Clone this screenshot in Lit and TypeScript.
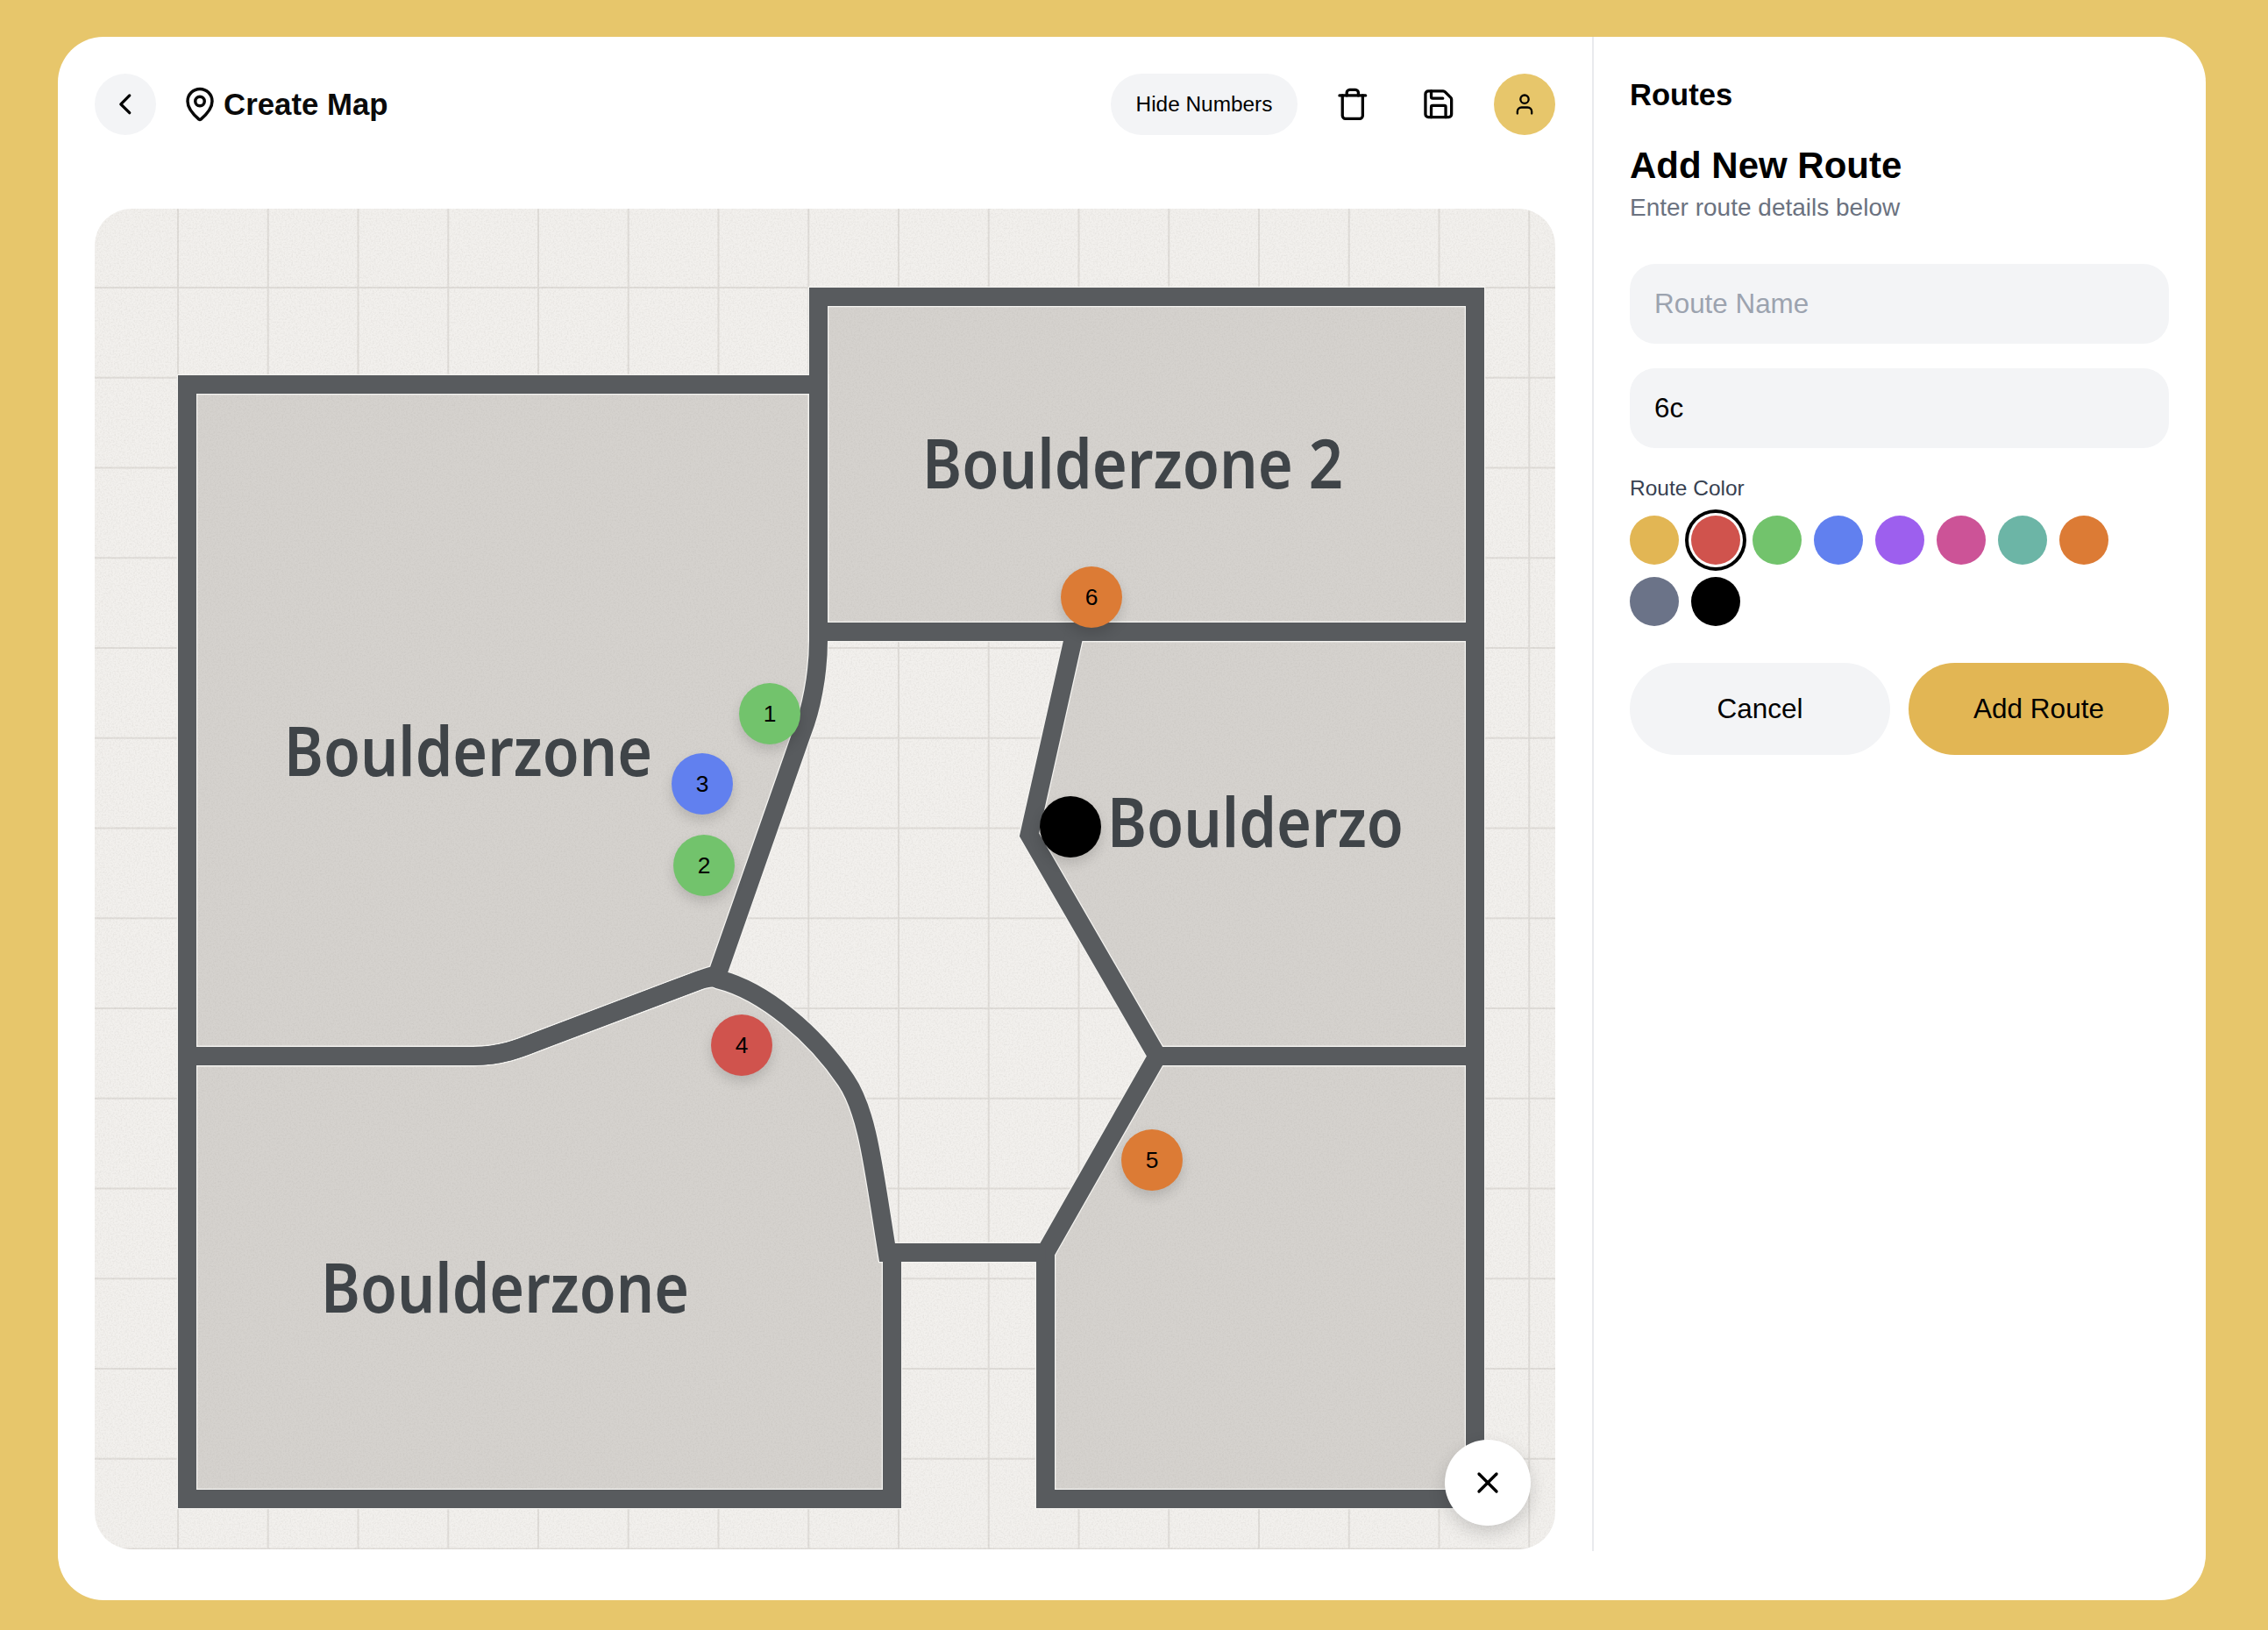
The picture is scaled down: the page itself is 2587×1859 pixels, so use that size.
import { css, html, LitElement, svg } from 'lit';
import { customElement, state } from 'lit/decorators.js';
import { classMap } from 'lit/directives/class-map.js';
import { styleMap } from 'lit/directives/style-map.js';

const ROUTE_COLORS = [
    '#e2b654', '#d0534d', '#72c36c', '#6180ef', '#9d5fee',
    '#cc5397', '#6cb5a6', '#dc7b35', '#6b7388', '#000000',
];

// Pin centres, in map pixels
const PINS = [
    { n: 1, x: 770, y: 576, color: '#72c36c' },
    { n: 2, x: 695, y: 749, color: '#72c36c' },
    { n: 3, x: 693, y: 656, color: '#6180ef' },
    { n: 4, x: 738, y: 954, color: '#d0534d' },
    { n: 5, x: 1206, y: 1085, color: '#dc7b35' },
    { n: 6, x: 1137, y: 443, color: '#dc7b35' },
    { n: 7, x: 1113, y: 705, color: '#000000' },
];

// Floor plan, drawn in page coordinates through the viewBox.
// Straight walls sit on .5 so their 21px stroke lands on whole pixels.
const ZONES = [
    'M213.5 438.5H933.5V730C933.5 770 925 810 915 835L818 1112Q812 1112 792 1120L612 1188C592 1196 572 1204 540 1204.5H213.5Z',
    'M213.5 1204.5H540C572 1204 592 1196 612 1188L792 1120Q812 1112 820 1117C872 1130 930 1180 965 1232C990 1269 996 1330 1012 1428.5H1017.5V1709.5H213.5Z',
    'M933.5 338.5H1682.5V720.5H933.5Z',
    'M1226 720.5L1174 952L1320 1204.5H1682.5V720.5Z',
    'M1320 1204.5H1682.5V1709.5H1192.5V1428.5Z',
    'M1012 1428.5H1192.5',
];

const LABELS = [
    { text: 'Boulderzone', x: 324, y: 885, w: 420 },
    { text: 'Boulderzone', x: 366, y: 1497, w: 420 },
    { text: 'Boulderzone 2', x: 1052, y: 557, w: 480 },
    { text: 'Boulderzo', x: 1263, y: 966, w: 338 },
];

const GRID_STEP = 102.75;

const icon = (size: number, body: unknown) => html`<svg
    width=${size} height=${size} viewBox="0 0 24 24" fill="none" stroke="currentColor"
    stroke-width="2" stroke-linecap="round" stroke-linejoin="round">${body}</svg>`;

const backIcon = svg`<path d="m15 18-6-6 6-6"/>`;
const pinIcon = svg`<path d="M20 10c0 4.993-5.539 10.193-7.399 11.799a1 1 0 0 1-1.202 0C9.539 20.193 4 14.993 4 10a8 8 0 0 1 16 0"/><circle cx="12" cy="10" r="3"/>`;
const trashIcon = svg`<path d="M3 6h18"/><path d="M19 6v14c0 1-1 2-2 2H7c-1 0-2-1-2-2V6"/><path d="M8 6V4c0-1 1-2 2-2h4c1 0 2 1 2 2v2"/>`;
const saveIcon = svg`<path d="M15.2 3a2 2 0 0 1 1.4.6l3.8 3.8a2 2 0 0 1 .6 1.4V19a2 2 0 0 1-2 2H5a2 2 0 0 1-2-2V5a2 2 0 0 1 2-2z"/><path d="M17 21v-7a1 1 0 0 0-1-1H8a1 1 0 0 0-1 1v7"/><path d="M7 3v4a1 1 0 0 0 1 1h7"/>`;
const userIcon = svg`<path d="M19 21v-2a4 4 0 0 0-4-4H9a4 4 0 0 0-4 4v2"/><circle cx="12" cy="7" r="4"/>`;
const closeIcon = svg`<path d="M18 6 6 18"/><path d="m6 6 12 12"/>`;

// Create Map page
// -----------------------------------------------------------------------------
@customElement('app-root')
export class AppRoot extends LitElement {
    static override styles = css`
    :host {
      display: block;
      box-sizing: border-box;
      height: 1859px;
      padding: 42px 71px 34px 66px;
      background: #e7c66b;
      font-family: "Liberation Sans", Arial, sans-serif;
      color: #000;
    }
    * {
      box-sizing: border-box;
    }
    button {
      font-family: inherit;
      color: inherit;
      border: none;
      padding: 0;
    }
    .card {
      display: flex;
      align-items: flex-start;
      height: 100%;
      background: #fff;
      border-radius: 52px;
      overflow: hidden;
    }
    .editor {
      width: 1752px;
      height: 1727px;
      flex: none;
      padding: 42px 42px 0 42px;
      border-right: 2px solid #e9eaed;
    }
    .header {
      display: flex;
      align-items: center;
      height: 70px;
      margin-bottom: 84px;
    }
    .round {
      display: flex;
      align-items: center;
      justify-content: center;
      width: 70px;
      height: 70px;
      flex: none;
      border-radius: 50%;
      background: transparent;
    }
    .round.grey {
      background: #f3f4f6;
    }
    .round.gold {
      background: #e7c66b;
    }
    .title {
      display: flex;
      align-items: center;
      gap: 6px;
      margin: 0 auto 0 29px;
      font-size: 34.8px;
      font-weight: 700;
      color: #0a0a0a;
    }
    .actions {
      display: flex;
      align-items: center;
      gap: 28px;
    }
    .pill {
      width: 213px;
      height: 70px;
      border-radius: 35px;
      background: #f3f4f6;
      font-size: 24.4px;
    }
    .map {
      position: relative;
      height: 1529px;
      border-radius: 42px;
      overflow: hidden;
      background: #f2f0ed;
    }
    .plan {
      display: block;
    }
    .grid-line {
      stroke: #dfdcd8;
      stroke-width: 2;
    }
    .zone-fill {
      fill: #d5d2ce;
    }
    .zone-edge {
      fill: none;
      stroke: #f4f3f0;
      stroke-width: 23.5;
    }
    .zone-wall {
      fill: none;
      stroke: #585b5e;
      stroke-width: 21;
    }
    .zone-label {
      fill: #3f4448;
      font-family: "Noto Sans", sans-serif;
      font-size: 77px;
      font-weight: 600;
    }
    .pin {
      position: absolute;
      display: flex;
      align-items: center;
      justify-content: center;
      width: 70px;
      height: 70px;
      margin: -35px 0 0 -35px;
      border-radius: 50%;
      font-size: 26.4px;
      box-shadow: 0 7px 14px rgba(0, 0, 0, 0.14);
    }
    .close {
      position: absolute;
      right: 28px;
      bottom: 27px;
      display: flex;
      align-items: center;
      justify-content: center;
      width: 98px;
      height: 98px;
      border-radius: 50%;
      background: #fff;
      box-shadow: 0 8px 20px rgba(0, 0, 0, 0.16);
    }
    .panel {
      flex: 1;
      min-width: 0;
      padding: 46px 42px 0 41px;
    }
    .panel-title {
      margin: 0;
      font-size: 34.6px;
      line-height: 40px;
      font-weight: 700;
    }
    .form-title {
      margin: 36px 0 6px;
      font-size: 42px;
      line-height: 50px;
      font-weight: 700;
    }
    .form-sub {
      margin: 0 0 47px;
      font-size: 28px;
      line-height: 34px;
      color: #6b7280;
    }
    .field {
      display: block;
      width: 100%;
      height: 91px;
      margin-bottom: 28px;
      padding: 0 28px;
      border: none;
      border-radius: 29px;
      background: #f3f4f6;
      font-family: inherit;
      font-size: 31.4px;
      color: #000;
    }
    .field::placeholder {
      color: #9ca3af;
      opacity: 1;
    }
    .color-label {
      margin: 31px 0 16px;
      font-size: 24.5px;
      line-height: 30px;
      color: #374151;
    }
    .swatches {
      display: flex;
      flex-wrap: wrap;
      gap: 14px;
      margin-bottom: 42px;
    }
    .swatch {
      width: 56px;
      height: 56px;
      border-radius: 50%;
    }
    .swatch.selected {
      box-shadow: 0 0 0 3px #fff, 0 0 0 7px #000;
    }
    .buttons {
      display: grid;
      grid-template-columns: 1fr 1fr;
      gap: 21px;
    }
    .btn {
      height: 105px;
      border-radius: 53px;
      font-size: 31.5px;
      background: #f3f4f6;
    }
    .btn.primary {
      background: #e2b654;
    }
  `;

    @state() private selectedColor = 1;

    private renderPlan() {
        const columns = Array.from({ length: 16 }, (_, i) => 203 + i * GRID_STEP);
        const rows = Array.from({ length: 15 }, (_, i) => 328 + i * GRID_STEP);
        return html`<svg class="plan" width="1666" height="1529" viewBox="108 238 1666 1529">
      <defs>
        <filter id="grain" x="0" y="0" width="100%" height="100%">
          <feTurbulence type="fractalNoise" baseFrequency="0.55" numOctaves="3" seed="4"/>
          <feColorMatrix values="0 0 0 0 0.35  0 0 0 0 0.33  0 0 0 0 0.3  0.3 0 0 0 -0.12"/>
        </filter>
      </defs>
      ${columns.map((x) => svg`<line class="grid-line" x1=${x} x2=${x} y1="238" y2="1767"/>`)}
      ${rows.map((y) => svg`<line class="grid-line" x1="108" x2="1774" y1=${y} y2=${y}/>`)}
      ${ZONES.map((d) => svg`<path class="zone-fill" d=${d}/>`)}
      <rect x="108" y="238" width="1666" height="1529" filter="url(#grain)"/>
      ${ZONES.map((d) => svg`<path class="zone-edge" d=${d}/>`)}
      ${ZONES.map((d) => svg`<path class="zone-wall" d=${d}/>`)}
      ${LABELS.map((l) => svg`<text class="zone-label" x=${l.x} y=${l.y}
          textLength=${l.w} lengthAdjust="spacingAndGlyphs">${l.text}</text>`)}
    </svg>`;
    }

    override render() {
        return html`<div class="card">
      <section class="editor">
        <header class="header">
          <button class="round grey">${icon(39.6, backIcon)}</button>
          <div class="title">${icon(42, pinIcon)}<span>Create Map</span></div>
          <div class="actions">
            <button class="pill">Hide Numbers</button>
            <button class="round">${icon(39.6, trashIcon)}</button>
            <button class="round">${icon(39.6, saveIcon)}</button>
            <button class="round gold">${icon(28, userIcon)}</button>
          </div>
        </header>
        <div class="map">
          ${this.renderPlan()}
          ${PINS.map((p) => html`<div class="pin"
              style=${styleMap({ left: `${p.x}px`, top: `${p.y}px`, background: p.color })}>${p.n}</div>`)}
          <button class="close">${icon(40, closeIcon)}</button>
        </div>
      </section>
      <aside class="panel">
        <h3 class="panel-title">Routes</h3>
        <h2 class="form-title">Add New Route</h2>
        <p class="form-sub">Enter route details below</p>
        <input class="field" placeholder="Route Name" />
        <input class="field" .value=${'6c'} />
        <div class="color-label">Route Color</div>
        <div class="swatches">
          ${ROUTE_COLORS.map((c, i) => html`<div
              class=${classMap({ swatch: true, selected: i === this.selectedColor })}
              style=${styleMap({ background: c })}
              @click=${() => { this.selectedColor = i; }}></div>`)}
        </div>
        <div class="buttons">
          <button class="btn">Cancel</button>
          <button class="btn primary">Add Route</button>
        </div>
      </aside>
    </div>`;
    }
}
